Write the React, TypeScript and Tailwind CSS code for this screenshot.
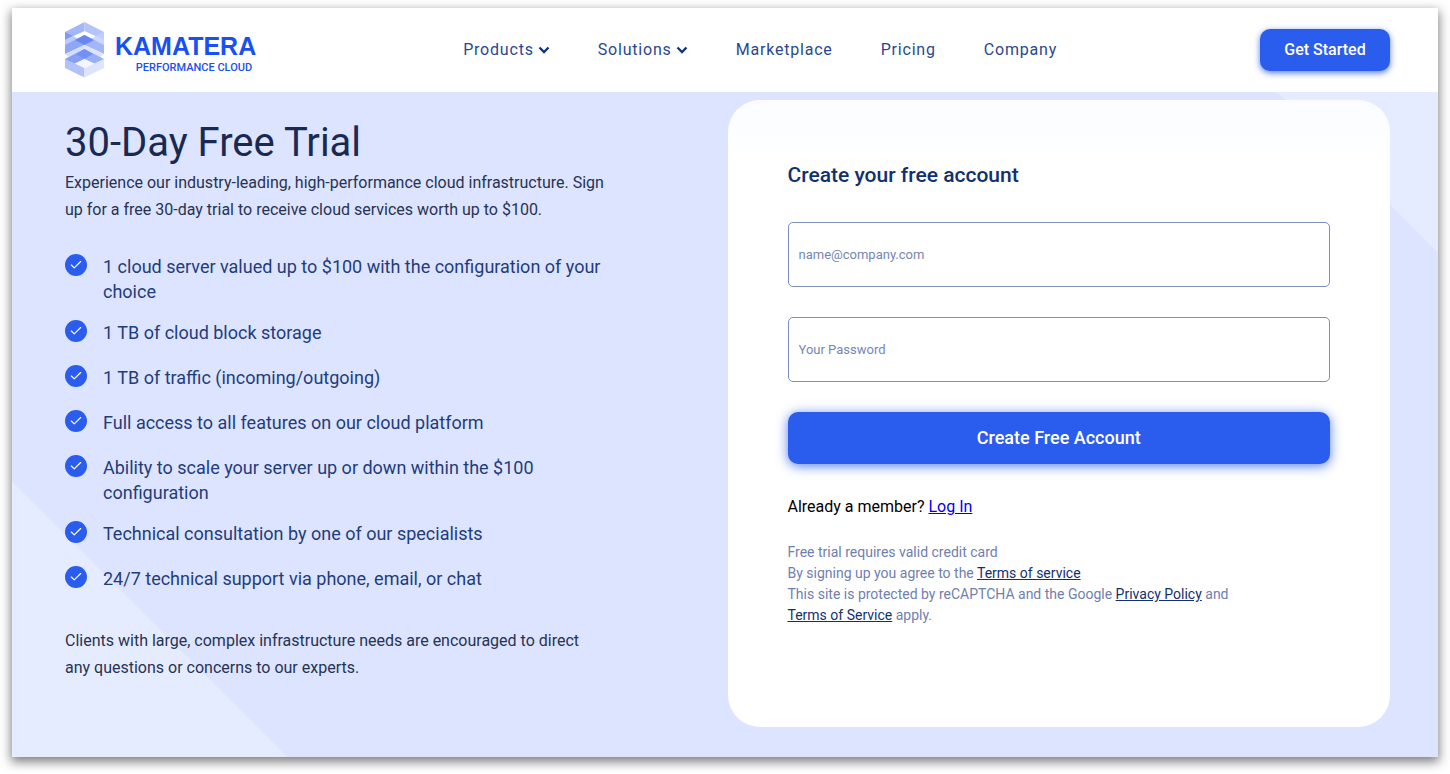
import { Check } from "lucide-react";

const NAV_ITEMS = [
  { label: "Products", hasMenu: true },
  { label: "Solutions", hasMenu: true },
  { label: "Marketplace", hasMenu: false },
  { label: "Pricing", hasMenu: false },
  { label: "Company", hasMenu: false },
];

const FEATURES = [
  "1 cloud server valued up to $100 with the configuration of your choice",
  "1 TB of cloud block storage",
  "1 TB of traffic (incoming/outgoing)",
  "Full access to all features on our cloud platform",
  "Ability to scale your server up or down within the $100 configuration",
  "Technical consultation by one of our specialists",
  "24/7 technical support via phone, email, or chat",
];

// Stacked translucent roofs over an open base, all folded on the centre line.
function LogoMark() {
  return (
    <svg width="40" height="56" viewBox="0 0 40 56" aria-hidden="true">
      <path d="M0 10 19.5 0v9L0 18z" fill="#a3b7f8" />
      <path d="M39 10 19.5 0v9L39 18z" fill="#b4c4fa" />
      <path d="M0 10v8l8-4z" fill="#7f9af4" />
      <path d="M39 10v8l-8-4z" fill="#c0cdfb" />
      <path d="m0 18 8-4 5 3-13 7z" fill="#bccafb" />
      <path d="m39 18-8-4-5 3 13 7z" fill="#cbd6fc" />
      <path d="M0 23 19.500 13v10L0 32z" fill="#8ea7f6" />
      <path d="M39 23 19.500 13v10L39 32z" fill="#a2b6f8" />
      <path d="m10 18 9.500-5 9.500 5-9.500 5z" fill="#6886f1" />
      <path d="m0 32 19.500-9v5L8 38z" fill="#d3ddfd" />
      <path d="m39 32-19.500-9v5L31 38z" fill="#dce4fe" />
      <path d="M0 37 19.500 27v10L0 46z" fill="#86a0f5" />
      <path d="M39 37 19.500 27v10L39 46z" fill="#98aff7" />
      <path d="m11 32 8.500-5 8.500 5-8.500 5z" fill="#7390f3" />
      <path d="M0 37v9l19.500 9.500V46z" fill="#b1c2fa" />
      <path d="M39 37v9l-19.500 9.500V46z" fill="#dde5fe" />
      <path d="m19.500 37 8 4.500-8 4.500-8-4.500z" fill="#f3f6ff" />
    </svg>
  );
}

function Logo() {
  return (
    <a href="#" className="flex items-center gap-2.5 text-[#1a50f0]">
      <LogoMark />
      <span className="flex flex-col items-end pt-3 pr-1">
        <span className="font-['Liberation_Sans',sans-serif] text-[25px] leading-6 font-bold">
          KAMATERA
        </span>
        <span className="pr-1 text-[11px] leading-5 font-medium">
          PERFORMANCE CLOUD
        </span>
      </span>
    </a>
  );
}

function NavChevron() {
  return (
    <svg width="12" height="8" viewBox="0 0 12 8" fill="none" aria-hidden="true">
      <path d="m1.500 1.500 4.500 4.500 4.500-4.500" stroke="#0d3383" strokeWidth="2.300" />
    </svg>
  );
}

function Header() {
  return (
    <header className="flex h-[84px] items-center justify-between bg-white pr-12 pl-[53px]">
      <Logo />
      <nav className="flex items-center gap-12 tracking-wider text-[#2a488f]">
        {NAV_ITEMS.map(({ label, hasMenu }) => (
          <a key={label} href="#" className="flex items-center gap-1">
            {label}
            {hasMenu && <NavChevron />}
          </a>
        ))}
      </nav>
      <button
        type="button"
        className="h-[42px] w-[130px] rounded-[10px] bg-[#2a5cee] font-medium text-white shadow-[0_2px_6px_#2a5ceecc]"
      >
        Get Started
      </button>
    </header>
  );
}

function TrialDetails() {
  return (
    <section className="pt-4 pr-[120px] text-[#263353]">
      <h1 className="text-[40px] leading-[53px] text-[#192a52]">
        30-Day Free Trial
      </h1>
      <p className="leading-[27px]">
        Experience our industry-leading, high-performance cloud infrastructure.
        Sign up for a free 30-day trial to receive cloud services worth up to
        $100.
      </p>
      <ul className="mt-[31px] flex flex-col gap-4 text-lg leading-[25px] text-[#1f3c7d]">
        {FEATURES.map((feature) => (
          <li key={feature} className="flex min-h-[29px] gap-4">
            <span className="flex size-[22px] shrink-0 items-center justify-center rounded-full bg-[#2a5cee]">
              <Check className="size-3.5 text-white" strokeWidth={2} />
            </span>
            {feature}
          </li>
        ))}
      </ul>
      <p className="mt-8 leading-[27px]">
        Clients with large, complex infrastructure needs are encouraged to
        direct any questions or concerns to our experts.
      </p>
    </section>
  );
}

function Field({
  type,
  label,
  placeholder,
}: {
  type: string;
  label: string;
  placeholder: string;
}) {
  return (
    <input
      type={type}
      aria-label={label}
      placeholder={placeholder}
      className="block h-[65px] w-full rounded-[5px] border border-[#7c8dbf] bg-white px-2.5 text-[13px] text-[#1f3c7d] placeholder:text-[#7587b5]"
    />
  );
}

function LegalLink({ children }: { children: React.ReactNode }) {
  return (
    <a href="#" className="whitespace-nowrap text-[#12306f] underline">
      {children}
    </a>
  );
}

function SignUpCard() {
  return (
    <section className="rounded-[32px] bg-linear-to-b from-[#fafcff] to-white to-[64px] px-[60px] pt-[60px] pb-[101px]">
      <form onSubmit={(event) => event.preventDefault()}>
        <h2 className="text-[21px] leading-[30px] font-medium text-[#12306f]">
          Create your free account
        </h2>
        <div className="mt-8 flex flex-col gap-[30px]">
          <Field type="email" label="Email" placeholder="name@company.com" />
          <Field
            type="password"
            label="Password"
            placeholder="Your Password"
          />
          <button
            type="submit"
            className="h-[52px] rounded-[10px] bg-[#2a5cee] text-lg font-medium text-white shadow-[0_2px_12px_#2a5ceecc]"
          >
            Create Free Account
          </button>
        </div>
      </form>
      <p className="mt-[31px] text-black">
        Already a member?{" "}
        <a href="#" className="text-[#0000ee] underline">
          Log In
        </a>
      </p>
      <p className="mt-[23px] text-sm leading-[21px] text-[#6f80ae]">
        Free trial requires valid credit card
        <br />
        By signing up you agree to the <LegalLink>Terms of service</LegalLink>
        <br />
        This site is protected by reCAPTCHA and the Google{" "}
        <LegalLink>Privacy Policy</LegalLink> and{" "}
        <LegalLink>Terms of Service</LegalLink> apply.
      </p>
    </section>
  );
}

export default function App() {
  return (
    <div className="bg-white px-3 pt-2 pb-[17px] font-[Roboto,sans-serif]">
      <div className="shadow-[0_4px_10px_1px_#00000080]">
        <Header />
        <main className="grid grid-cols-2 bg-[#dde4ff] bg-[linear-gradient(45deg,#e6ecff_194px,transparent_195px),linear-gradient(225deg,#e6ecff_113px,transparent_114px)] pt-2 pr-12 pb-[30px] pl-[53px]">
          <TrialDetails />
          <SignUpCard />
        </main>
      </div>
    </div>
  );
}
